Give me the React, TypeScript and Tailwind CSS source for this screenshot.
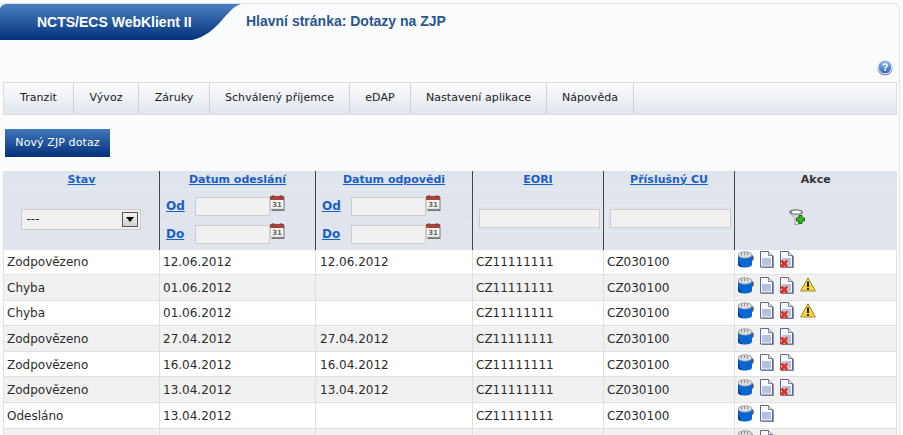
const menuItems = [
  { label: 'Tranzit', width: 'w-[70px]' },
  { label: 'Vývoz', width: 'w-[65px]' },
  { label: 'Záruky', width: 'w-[71px]' },
  { label: 'Schválený příjemce', width: 'w-[140px]' },
  { label: 'eDAP', width: 'w-[61px]' },
  { label: 'Nastavení aplikace', width: 'w-[136px]' },
  { label: 'Nápověda', width: 'w-[87px]' },
];

const rows = [
  { stav: 'Zodpovězeno', sent: '12.06.2012', reply: '12.06.2012', cross: true, warn: false },
  { stav: 'Chyba', sent: '01.06.2012', reply: '', cross: true, warn: true },
  { stav: 'Chyba', sent: '01.06.2012', reply: '', cross: true, warn: true },
  { stav: 'Zodpovězeno', sent: '27.04.2012', reply: '27.04.2012', cross: true, warn: false },
  { stav: 'Zodpovězeno', sent: '16.04.2012', reply: '16.04.2012', cross: true, warn: false },
  { stav: 'Zodpovězeno', sent: '13.04.2012', reply: '13.04.2012', cross: true, warn: false },
  { stav: 'Odesláno', sent: '13.04.2012', reply: '', cross: false, warn: false },
  { stav: '', sent: '', reply: '', cross: false, warn: false },
];

function HelpIcon() {
  return (
    <svg width="16" height="17" viewBox="0 0 16 17">
      <defs>
        <linearGradient id="helpFill" x1="0" y1="0" x2="0" y2="1">
          <stop offset="0" stopColor="#9cc0ec" />
          <stop offset="1" stopColor="#2a66bd" />
        </linearGradient>
      </defs>
      <circle cx="8" cy="9" r="7.500" fill="#8a8f96" />
      <circle cx="8" cy="8" r="6.800" fill="url(#helpFill)" stroke="#e4ebf5" strokeWidth="1" />
      <path d="M5.900 6.600c.2-1.200 1.100-1.700 2.200-1.700 1.200 0 2.100.7 2.100 1.700 0 1.500-2.100 1.400-2.100 2.800" fill="none" stroke="#fff" strokeWidth="1.500" />
      <rect x="7.300" y="10.200" width="1.600" height="1.600" fill="#fff" />
    </svg>
  );
}

function CalendarIcon() {
  return (
    <svg width="15" height="16" viewBox="0 0 15 16" className="shrink-0">
      <rect x="1.500" y="2" width="13" height="14" fill="#77787c" />
      <rect x="0.500" y="1" width="13" height="13" fill="#f4f4f2" stroke="#b5b5b3" strokeWidth="0.6" />
      <rect x="0" y="1" width="14" height="4" fill="#a5423e" />
      <rect x="2.500" y="0" width="1" height="2" fill="#6c2a28" />
      <rect x="10.500" y="0" width="1" height="2" fill="#6c2a28" />
      <text x="7" y="12" fontSize="7" textAnchor="middle" fill="#666" fontFamily="'DejaVu Sans', sans-serif" fontWeight="700">31</text>
    </svg>
  );
}

function FilterAddIcon() {
  return (
    <svg width="17" height="17" viewBox="0 0 17 17">
      <path d="M.5 3 6 10v5.500h3.500V10L14 3z" fill="#d2d4d6" stroke="#8a8c8e" strokeWidth="0.7" />
      <path d="M2.500 5 6.800 10v5h1V10z" fill="#f7f7f7" />
      <ellipse cx="7" cy="3" rx="6.800" ry="2.700" fill="#77797c" />
      <ellipse cx="7.300" cy="2.900" rx="4.800" ry="1.500" fill="#f8f8f8" />
      <path d="M10 6.500h3v2.500h2.500v3H13v2.500h-3V12H7.500V9H10z" fill="#2fc01c" stroke="#0e5c0a" strokeWidth="0.9" />
    </svg>
  );
}

function DbIcon() {
  return (
    <svg width="16" height="17" viewBox="0 0 16 17" className="shrink-0">
      <path d="M13 4c1.800.2 2.800 1.200 2.800 2.700 0 2-.8 3.300-2.800 4z" fill="#4e5a68" />
      <path d="M0 4v9.500c0 1.800 3.200 3 7 3s7-1.200 7-3V4z" fill="#0a66d2" />
      <path d="M0 7c.6 4.300 2.200 7 4.500 9.300C2 16 0 15 0 13.500z" fill="#073f8e" />
      <ellipse cx="7" cy="4" rx="7" ry="3.200" fill="#dcdee0" stroke="#7d8288" strokeWidth="0.7" />
      <path d="M3.500 1.800v2.800M6.500 1.300v2.800M9.500 1.600v2.800" stroke="#8a8f94" strokeWidth="1" />
    </svg>
  );
}

function DocIcon({ cross }: { cross?: boolean }) {
  return (
    <svg width="14" height="17" viewBox="0 0 14 17" className="shrink-0">
      <path d="M1.500 1.500h8l4.500 4v11.500h-12.500z" fill="#8a93aa" />
      <path d="M.5.5h8l4 4v11.500h-12z" fill="#f7f9fc" stroke="#5f6987" strokeWidth="1" />
      <path d="M8.500.5v4h4" fill="#dfe4f0" stroke="#5f6987" strokeWidth="0.8" />
      <rect x="2" y="7" width="9" height="7.500" fill="#b6c2de" />
      {cross && <path d="M0 9.500 2.500 9l1.800 1.800L6 9l2.200.8L6.300 12.500l1.900 2.700-2.200 1.300-1.700-1.900L2.500 16.800 0 15.500 2 12.500z" fill="#e5301c" />}
    </svg>
  );
}

function WarnIcon() {
  return (
    <svg width="16" height="16" viewBox="0 0 16 16" className="shrink-0">
      <path d="M8 .8 15.400 14H.6z" fill="#f5d63a" stroke="#a08a28" strokeWidth="1" strokeLinejoin="round" />
      <rect x="7" y="4.500" width="2" height="5.500" fill="#222" />
      <rect x="7" y="11" width="2" height="2" fill="#222" />
    </svg>
  );
}

function DateFilter() {
  return (
    <div className="flex h-[59px] flex-col px-[3px] pt-[5px]">
      {['Od', 'Do'].map(label => (
        <div key={label} className="flex h-[28px] shrink-0 items-start border-b border-[#e6eaf1] last:border-b-0">
          <a href="#" className="mt-[4px] w-[32px] pl-[3px] text-[12px] leading-[15px] font-bold text-[#1a5fc8] underline">{label}</a>
          <span className="mt-[2px] h-[19px] w-[75px] border border-[#cccccc] bg-[#f0f0f0]"></span>
          <CalendarIcon />
        </div>
      ))}
    </div>
  );
}

function TextFilter() {
  return (
    <div className="mb-[2px] ml-[2px] border border-[#e6eaf1] py-[3px] pr-[2px] pl-[3px]">
      <div className="h-[19px] border border-[#cccccc] bg-[#f0f0f0]"></div>
    </div>
  );
}

export default function App() {
  return (
    <div className="h-[435px] w-[903px] overflow-hidden bg-[#fbfcfe] pt-[3px] font-['DejaVu_Sans',sans-serif] text-[12px] text-[#2b2b2b]">
      <div className="h-[440px] w-[900px] rounded-tr-md border-t border-r border-[#e2e2e2]">
        <div className="flex h-[37px] items-center">
          <div className="relative h-[36px] w-[240px] self-start">
            <svg width="242" height="36" viewBox="0 0 242 36" className="absolute top-0 left-0">
              <defs>
                <linearGradient id="headBlue" x1="0" y1="0" x2="0" y2="1">
                  <stop offset="0" stopColor="#4a80c0" />
                  <stop offset="1" stopColor="#03307a" />
                </linearGradient>
              </defs>
              <path d="M0 6C0 2 3 0 7 0H241C226 4 219 30 192 36H0z" fill="url(#headBlue)" />
            </svg>
            <span className="absolute top-[8px] left-[37px] font-['Liberation_Sans',sans-serif] text-[14px] leading-[20px] font-bold whitespace-nowrap text-white">NCTS/ECS WebKlient II</span>
          </div>
          <h1 className="ml-[6px] pb-[3px] font-['Liberation_Sans',sans-serif] text-[14px] font-bold text-[#2a5590]">Hlavní stránka: Dotazy na ZJP</h1>
        </div>

        <div className="flex h-[41px] justify-end pt-[18px] pr-[6px]">
          <HelpIcon />
        </div>

        <nav className="ml-[3px] flex h-[33px] w-[894px] border border-[#dcdcdc] bg-gradient-to-b from-[#fbfcfd] to-[#e1e6ed] text-[11px] tracking-[0.06px]">
          {menuItems.map(item => (
            <a key={item.label} href="#" className={`flex items-center justify-center border-r border-[#cfd3d8] text-[#222] ${item.width}`}>{item.label}</a>
          ))}
        </nav>

        <button className="mt-[14px] ml-[5px] block h-[28px] w-[105px] bg-gradient-to-b from-[#4279bb] to-[#03307a] text-[11px] tracking-[0.1px] text-white">Nový ZJP dotaz</button>

        <table className="mt-[14px] ml-[3px] w-[894px] table-fixed border-collapse">
          <colgroup>
            <col className="w-[156px]" />
            <col className="w-[156px]" />
            <col className="w-[157px]" />
            <col className="w-[131px]" />
            <col className="w-[131px]" />
            <col />
          </colgroup>
          <thead>
            <tr className="h-[18px] bg-[#dfe4ed] text-center text-[11px] font-bold">
              {['Stav', 'Datum odeslání', 'Datum odpovědi', 'EORI', 'Příslušný CU'].map(title => (
                <th key={title} className="border-r border-[#444] p-0 align-middle first:border-l first:border-l-[#dfe4ed]">
                  <a href="#" className="text-[#1a5fc8] underline">{title}</a>
                </th>
              ))}
              <th className="p-0 align-middle text-[#333]">Akce</th>
            </tr>
            <tr className="h-[60px] border-b border-[#dfe4ed] bg-[#dfe4ed]">
              <td className="border-t border-r border-l border-t-[#e8ebf1] border-r-[#444] border-l-[#dfe4ed] p-0 pr-[2px] align-middle">
                <div className="mx-auto flex h-[21px] w-[120px] items-center justify-between border border-[#cccccc] bg-[#f0f0f0] pr-[2px] pl-[5px]">
                  <span>---</span>
                  <span className="flex h-[15px] w-[16px] items-center justify-center border border-[#555] bg-gradient-to-b from-[#f4f4f4] to-[#cfcfcf]">
                    <span className="h-0 w-0 border-x-[4px] border-t-[5px] border-x-transparent border-t-black"></span>
                  </span>
                </div>
              </td>
              <td className="border-t border-r border-t-[#e8ebf1] border-r-[#444] p-0 align-top"><DateFilter /></td>
              <td className="border-t border-r border-t-[#e8ebf1] border-r-[#444] p-0 align-top"><DateFilter /></td>
              <td className="border-t border-r border-t-[#e8ebf1] border-r-[#444] p-0 align-middle"><TextFilter /></td>
              <td className="border-t border-r border-t-[#e8ebf1] border-r-[#444] p-0 align-middle"><TextFilter /></td>
              <td className="border-t border-t-[#e8ebf1] p-0 align-middle">
                <div className="flex justify-start pb-[4px] pl-[54px]"><FilterAddIcon /></div>
              </td>
            </tr>
          </thead>
          <tbody>
            {rows.map((row, i) => (
              <tr key={i} className={`h-[25.6px] border-b border-[#e0e0e0] ${i % 2 === 0 ? 'bg-white' : 'bg-[#f1f1f1]'}`}>
                <td className="border-x border-[#e0e0e0] py-0 pt-px pl-[3px]">{row.stav}</td>
                <td className="border-r border-[#e0e0e0] py-0 pt-px pl-[3px]">{row.sent}</td>
                <td className="border-r border-[#e0e0e0] py-0 pt-px pl-[4px]">{row.reply}</td>
                <td className="border-r border-[#e0e0e0] py-0 pt-px pl-[3px]">{i < 7 ? 'CZ11111111' : ''}</td>
                <td className="border-r border-[#e0e0e0] py-0 pt-px pl-[3px]">{i < 7 ? 'CZ030100' : ''}</td>
                <td className="border-r border-[#e0e0e0] py-0 pl-[3px]">
                  <div className="flex items-center gap-[6px] pb-[4px]">
                    <DbIcon />
                    <DocIcon />
                    {row.cross && <DocIcon cross />}
                    {row.warn && <WarnIcon />}
                  </div>
                </td>
              </tr>
            ))}
          </tbody>
        </table>
      </div>
    </div>
  );
}
